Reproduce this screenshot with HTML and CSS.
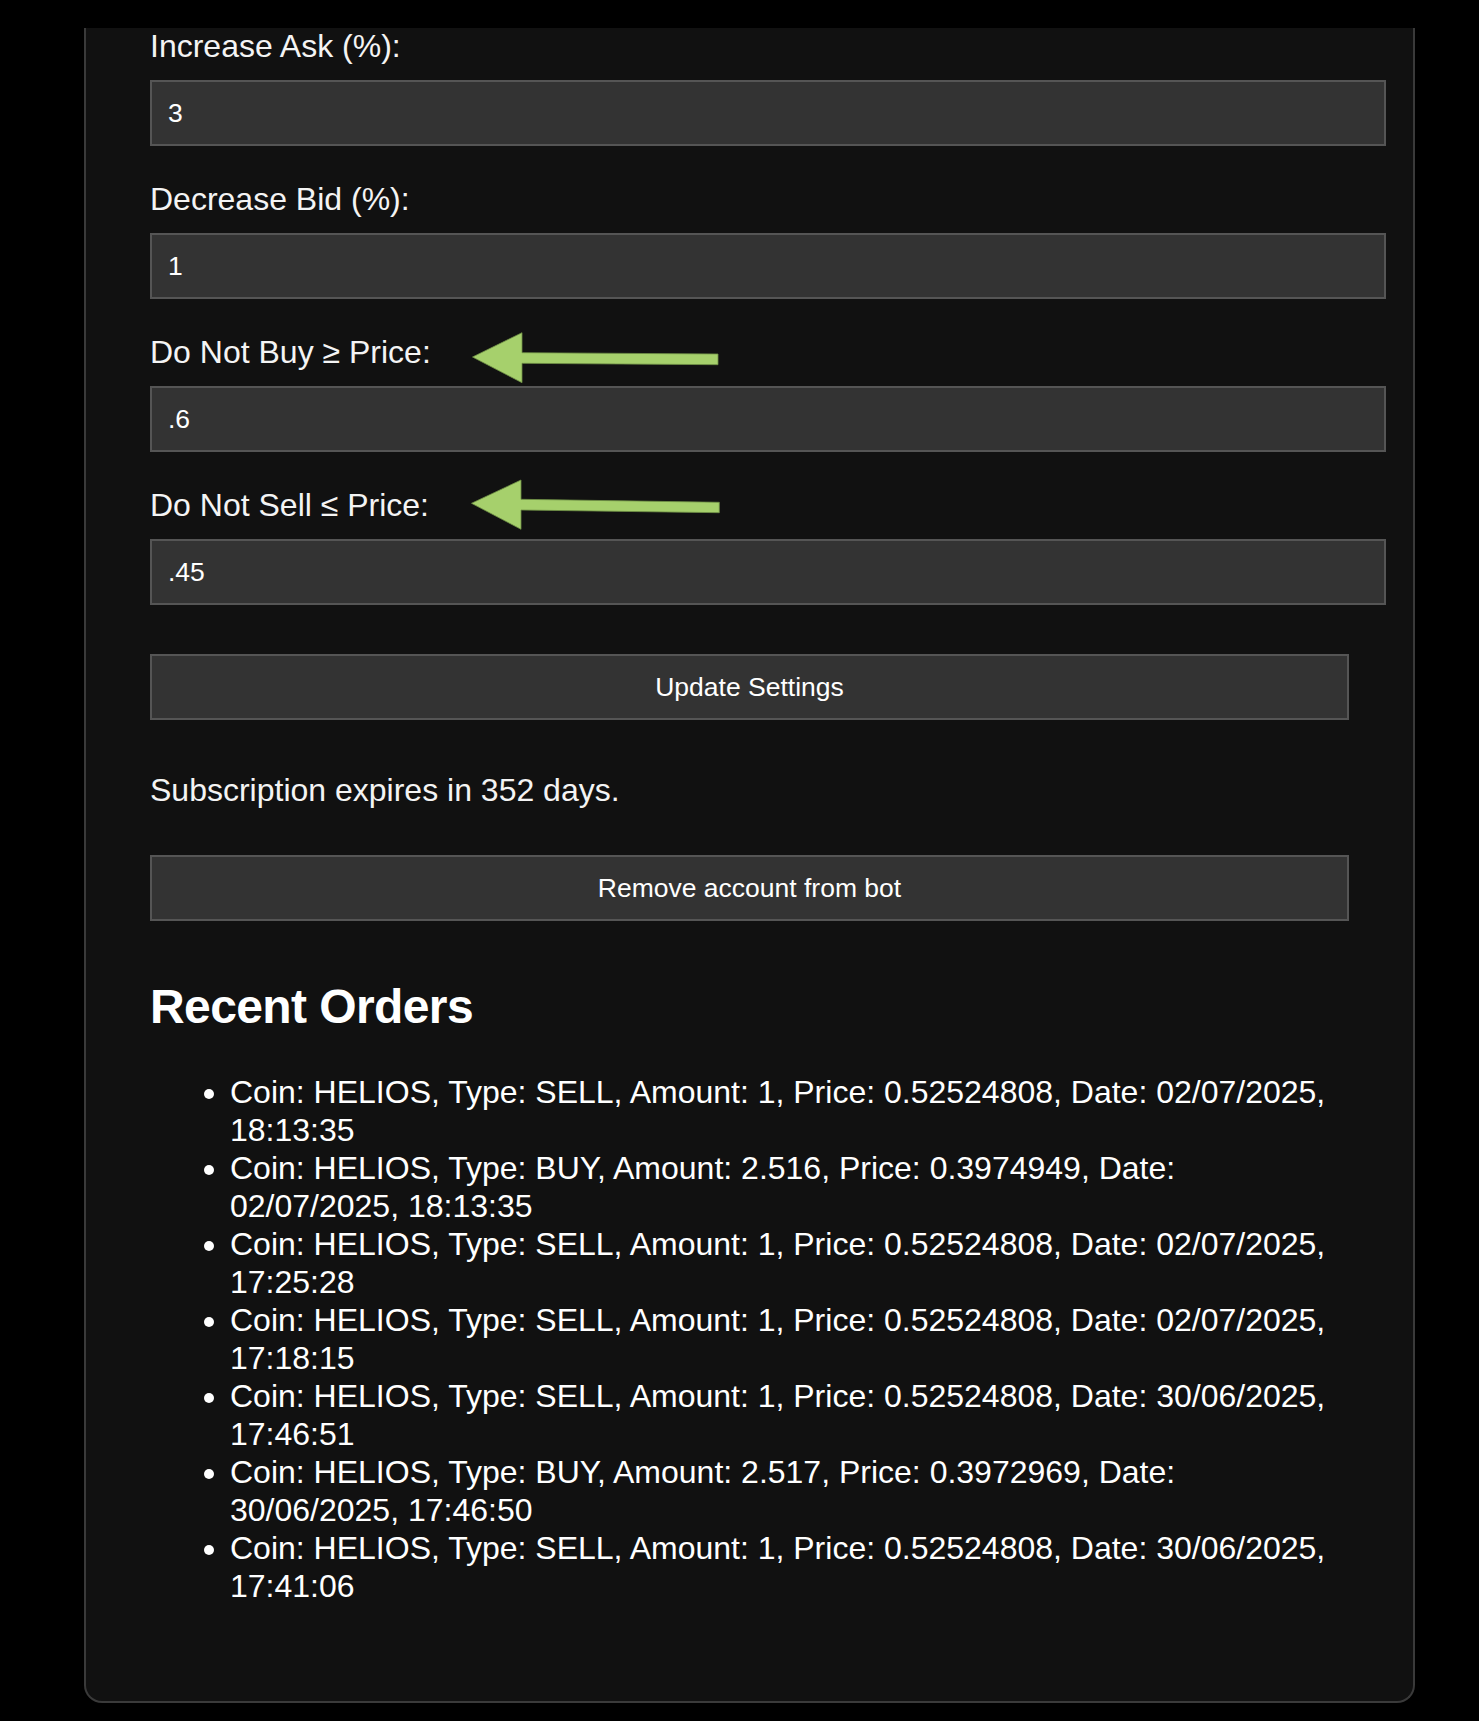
FILE: index.html
```html
<!DOCTYPE html>
<html lang="en">
<head>
<meta charset="utf-8">
<title>Bot Settings</title>
<link rel="stylesheet" href="styles.css">
</head>
<body>
<main class="card">
  <form class="settings">
    <div class="field">
      <label class="label" for="ask">Increase Ask (%):</label>
      <input class="input" id="ask" type="text" value="3">
    </div>
    <div class="field">
      <label class="label" for="bid">Decrease Bid (%):</label>
      <input class="input" id="bid" type="text" value="1">
    </div>
    <div class="field">
      <div class="label-row">
        <label class="label" for="nobuy">Do Not Buy ≥ Price:</label>
        <svg class="arrow arrow-buy" width="252" height="58" viewBox="0 0 252 58" aria-hidden="true">
          <path d="M1.5 27 L51 2.7 L51 22.7 L247 24 L247 34.7 L51 33.3 L51 52.7 Z" />
        </svg>
      </div>
      <input class="input" id="nobuy" type="text" value=".6">
    </div>
    <div class="field">
      <div class="label-row">
        <label class="label" for="nosell">Do Not Sell ≤ Price:</label>
        <svg class="arrow arrow-sell" width="252" height="58" viewBox="0 0 252 58" aria-hidden="true">
          <path d="M0.5 27.3 L50 4 L50 23.3 L248.3 26.3 L248.3 36.7 L50 34 L50 53.3 Z" />
        </svg>
      </div>
      <input class="input" id="nosell" type="text" value=".45">
    </div>
    <button class="btn btn-update" type="button">Update Settings</button>
  </form>

  <p class="subscription">Subscription expires in 352 days.</p>

  <button class="btn btn-remove" type="button">Remove account from bot</button>

  <h2 class="orders-title">Recent Orders</h2>
  <ul class="orders">
    <li>Coin: HELIOS, Type: SELL, Amount: 1, Price: 0.52524808, Date: 02/07/2025, 18:13:35</li>
    <li>Coin: HELIOS, Type: BUY, Amount: 2.516, Price: 0.3974949, Date: 02/07/2025, 18:13:35</li>
    <li>Coin: HELIOS, Type: SELL, Amount: 1, Price: 0.52524808, Date: 02/07/2025, 17:25:28</li>
    <li>Coin: HELIOS, Type: SELL, Amount: 1, Price: 0.52524808, Date: 02/07/2025, 17:18:15</li>
    <li>Coin: HELIOS, Type: SELL, Amount: 1, Price: 0.52524808, Date: 30/06/2025, 17:46:51</li>
    <li>Coin: HELIOS, Type: BUY, Amount: 2.517, Price: 0.3972969, Date: 30/06/2025, 17:46:50</li>
    <li>Coin: HELIOS, Type: SELL, Amount: 1, Price: 0.52524808, Date: 30/06/2025, 17:41:06</li>
  </ul>
</main>
</body>
</html>
```

FILE: styles.css
```css
html, body {
  margin: 0;
  padding: 0;
  background: #000;
}

body {
  padding-top: 28px;
  padding-bottom: 19px;
  font-family: "Liberation Sans", Arial, sans-serif;
  color: #fff;
}

.card {
  box-sizing: border-box;
  width: 1331px;
  margin-left: 84px;
  background: #111;
  border: 2px solid #3a3a3a;
  border-top: 0;
  border-radius: 0 0 18px 18px;
  padding: 0 64px 64px;
}

.settings {
  margin: 0;
}

.field {
  display: block;
}

.label-row {
  position: relative;
}

.label {
  display: block;
  font-size: 32px;
  line-height: 36px;
  margin-bottom: 16px;
  color: #f4f4f4;
}

.arrow {
  position: absolute;
  left: 321px;
  top: -4px;
  overflow: visible;
}

.arrow-sell {
  top: -11px;
}

.arrow path {
  fill: #a6d06c;
  stroke: #6f8f45;
  stroke-width: 0.8;
  stroke-linejoin: miter;
}

.input {
  display: block;
  box-sizing: border-box;
  width: calc(100% + 37px);
  height: 66px;
  margin: 0 0 35px;
  padding: 0 16px;
  background: #333;
  border: 2px solid #555;
  border-radius: 0;
  color: #fff;
  font-family: "Liberation Sans", Arial, sans-serif;
  font-size: 26.5px;
  outline: none;
}

.btn {
  display: block;
  box-sizing: border-box;
  width: 100%;
  height: 66px;
  margin: 0;
  padding: 0;
  background: #333;
  border: 2px solid #555;
  border-radius: 0;
  color: #fff;
  font-family: "Liberation Sans", Arial, sans-serif;
  font-size: 26.5px;
  text-align: center;
}

.btn-update {
  margin-top: 49px;
}

.subscription {
  font-size: 32px;
  line-height: 36px;
  margin: 52px 0 47px;
  color: #f4f4f4;
}

.orders-title {
  font-size: 48px;
  line-height: 56px;
  font-weight: 700;
  letter-spacing: -0.6px;
  margin: 58px 0 38px;
  color: #fff;
}

.orders {
  margin: 0 0 32px;
  padding-left: 80px;
  font-size: 32px;
  line-height: 38px;
  color: #fff;
}

.orders li {
  list-style: disc;
}
```
